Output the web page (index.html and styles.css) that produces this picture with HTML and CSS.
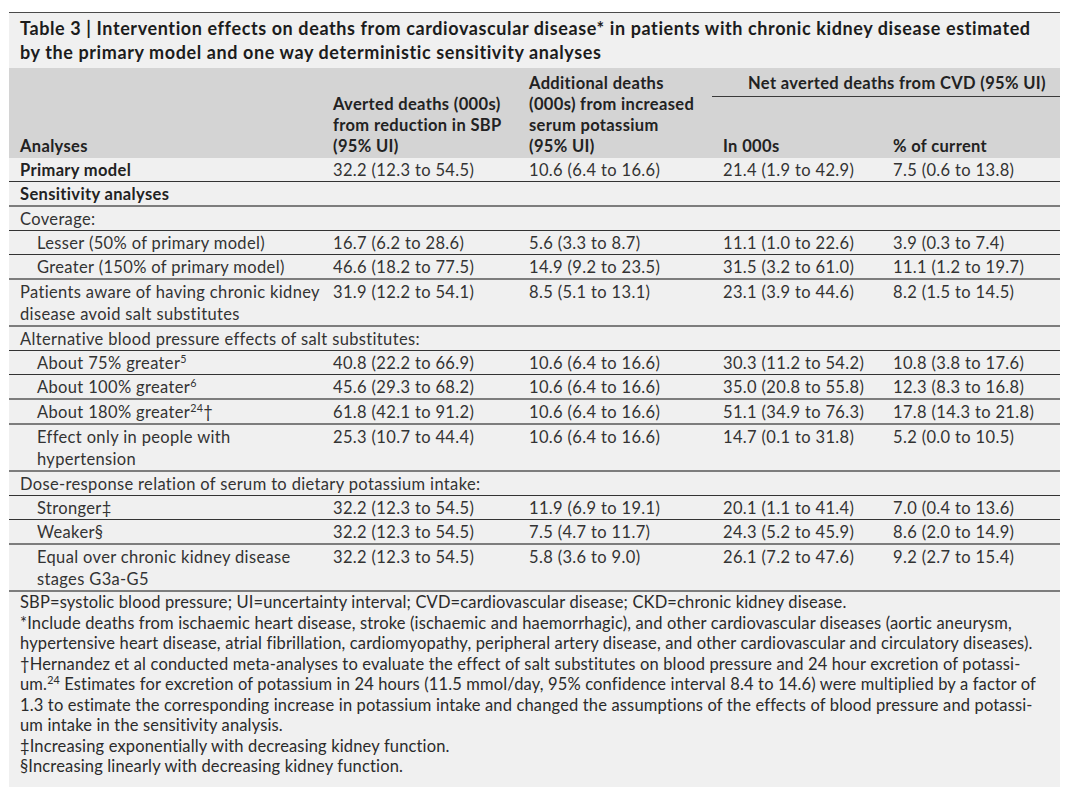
FILE: index.html
```html
<!DOCTYPE html>
<html lang="en">
<head>
<meta charset="utf-8">
<title>Table 3</title>
<link rel="stylesheet" href="styles.css">
</head>
<body>
<div class="card">
  <div class="title">Table 3 | Intervention effects on deaths from cardiovascular disease* in patients with chronic kidney disease estimated by the primary model and one way deterministic sensitivity analyses</div>
  <table class="data">
    <colgroup>
      <col class="c1"><col class="c2"><col class="c3"><col class="c4"><col class="c5">
    </colgroup>
    <thead>
      <tr>
        <th rowspan="2">Analyses</th>
        <th rowspan="2">Averted deaths (000s) from reduction in SBP (95%&nbsp;UI)</th>
        <th rowspan="2">Additional deaths (000s) from increased serum potassium (95%&nbsp;UI)</th>
        <th colspan="2" class="span"><span class="span-label">Net averted deaths from CVD (95% UI)</span></th>
      </tr>
      <tr>
        <th class="sub">In 000s</th>
        <th class="sub">% of current</th>
      </tr>
    </thead>
    <tbody>
      <tr class="primary"><td class="strong">Primary model</td><td>32.2 (12.3 to 54.5)</td><td>10.6 (6.4 to 16.6)</td><td>21.4 (1.9 to 42.9)</td><td>7.5 (0.6 to 13.8)</td></tr>
      <tr class="thick"><td class="strong" colspan="5">Sensitivity analyses</td></tr>
      <tr><td colspan="5">Coverage:</td></tr>
      <tr><td class="ind">Lesser (50% of primary model)</td><td>16.7 (6.2 to 28.6)</td><td>5.6 (3.3 to 8.7)</td><td>11.1 (1.0 to 22.6)</td><td>3.9 (0.3 to 7.4)</td></tr>
      <tr class="thick"><td class="ind">Greater (150% of primary model)</td><td>46.6 (18.2 to 77.5)</td><td>14.9 (9.2 to 23.5)</td><td>31.5 (3.2 to 61.0)</td><td>11.1 (1.2 to 19.7)</td></tr>
      <tr class="thick"><td>Patients aware of having chronic kidney disease avoid salt substitutes</td><td>31.9 (12.2 to 54.1)</td><td>8.5 (5.1 to 13.1)</td><td>23.1 (3.9 to 44.6)</td><td>8.2 (1.5 to 14.5)</td></tr>
      <tr><td colspan="5">Alternative blood pressure effects of salt substitutes:</td></tr>
      <tr><td class="ind">About 75% greater<sup>5</sup></td><td>40.8 (22.2 to 66.9)</td><td>10.6 (6.4 to 16.6)</td><td>30.3 (11.2 to 54.2)</td><td>10.8 (3.8 to 17.6)</td></tr>
      <tr class="thick"><td class="ind">About 100% greater<sup>6</sup></td><td>45.6 (29.3 to 68.2)</td><td>10.6 (6.4 to 16.6)</td><td>35.0 (20.8 to 55.8)</td><td>12.3 (8.3 to 16.8)</td></tr>
      <tr class="thick"><td class="ind">About 180% greater<sup>24</sup>†</td><td>61.8 (42.1 to 91.2)</td><td>10.6 (6.4 to 16.6)</td><td>51.1 (34.9 to 76.3)</td><td>17.8 (14.3 to 21.8)</td></tr>
      <tr class="thick"><td class="ind">Effect only in people with hypertension</td><td>25.3 (10.7 to 44.4)</td><td>10.6 (6.4 to 16.6)</td><td>14.7 (0.1 to 31.8)</td><td>5.2 (0.0 to 10.5)</td></tr>
      <tr><td colspan="5">Dose-response relation of serum to dietary potassium intake:</td></tr>
      <tr><td class="ind">Stronger‡</td><td>32.2 (12.3 to 54.5)</td><td>11.9 (6.9 to 19.1)</td><td>20.1 (1.1 to 41.4)</td><td>7.0 (0.4 to 13.6)</td></tr>
      <tr class="thick"><td class="ind">Weaker§</td><td>32.2 (12.3 to 54.5)</td><td>7.5 (4.7 to 11.7)</td><td>24.3 (5.2 to 45.9)</td><td>8.6 (2.0 to 14.9)</td></tr>
      <tr class="thick"><td class="ind">Equal over chronic kidney disease stages G3a-G5</td><td>32.2 (12.3 to 54.5)</td><td>5.8 (3.6 to 9.0)</td><td>26.1 (7.2 to 47.6)</td><td>9.2 (2.7 to 15.4)</td></tr>
    </tbody>
  </table>
  <div class="notes">
    <p>SBP=systolic blood pressure; UI=uncertainty interval; CVD=cardiovascular disease; CKD=chronic kidney disease.</p>
    <p>*Include deaths from ischaemic heart disease, stroke (ischaemic and haemorrhagic), and other cardiovascular diseases (aortic aneurysm,<br>hypertensive heart disease, atrial fibrillation, cardiomyopathy, peripheral artery disease, and other cardiovascular and circulatory diseases).</p>
    <p>†Hernandez et al conducted meta-analyses to evaluate the effect of salt substitutes on blood pressure and 24 hour excretion of potassi-<br>um.<sup>24</sup> Estimates for excretion of potassium in 24 hours (11.5 mmol/day, 95% confidence interval 8.4 to 14.6) were multiplied by a factor of<br>1.3 to estimate the corresponding increase in potassium intake and changed the assumptions of the effects of blood pressure and potassi-<br>um intake in the sensitivity analysis.</p>
    <p>‡Increasing exponentially with decreasing kidney function.</p>
    <p>§Increasing linearly with decreasing kidney function.</p>
  </div>
</div>
</body>
</html>
```
FILE: styles.css
```css
html, body {
  margin: 0;
  padding: 0;
  background: #ffffff;
}
body {
  padding: 12px 16px 0 9px;
  font-family: "Lato", "Noto Sans", sans-serif;
  color: #2b2b2b;
}
.card {
  width: 1051px;
  background: #f0f0f0;
  border-top: 1px solid #4a4a4a;
  padding-bottom: 10px;
}
.title {
  font-weight: 700;
  font-size: 18px;
  letter-spacing: 0.6px;
  line-height: 24px;
  color: #1c1c1c;
  padding: 3px 8px 4px 11px;
}
.data {
  width: 100%;
  border-collapse: separate;
  border-spacing: 0;
  table-layout: fixed;
  font-size: 16.5px;
  letter-spacing: 0.35px;
}
.c1 { width: 313px; }
.c2 { width: 196px; }
.c3 { width: 194px; }
.c4 { width: 170px; }
.c5 { width: 178px; }
.data thead th {
  background: #d4d4d4;
  font-weight: 700;
  color: #222;
  text-align: left;
  vertical-align: bottom;
  line-height: 21px;
  padding: 0 4px 1px 11px;
}
.data thead tr:first-child th {
  padding-top: 5px;
}
.data thead th.span {
  text-align: center;
  vertical-align: top;
  padding: 5px 0 0 0;
}
.span-label {
  display: block;
  padding: 0 0 2px 22px;
  border-bottom: 1px solid #3a3a3a;
}
.data thead th.sub {
  padding-top: 0;
}
.data td {
  vertical-align: top;
  line-height: 22px;
  padding: 1px 2px 0 11px;
  border-bottom: 1px solid #333;
  color: #333;
}
.data tr.thick td {
  border-bottom: 2px solid #7d7d7d;
  padding-top: 1px;
}
.data td.ind {
  padding-left: 28px;
}
.data td.strong {
  font-weight: 700;
  color: #222;
}
sup {
  font-size: 0.65em;
  line-height: 0;
  vertical-align: 0.55em;
}
.notes {
  font-size: 16.5px;
  letter-spacing: 0.15px;
  line-height: 20.5px;
  padding: 0 0 0 11px;
  color: #2b2b2b;
  white-space: nowrap;
}
.notes p {
  margin: 0;
}
```
